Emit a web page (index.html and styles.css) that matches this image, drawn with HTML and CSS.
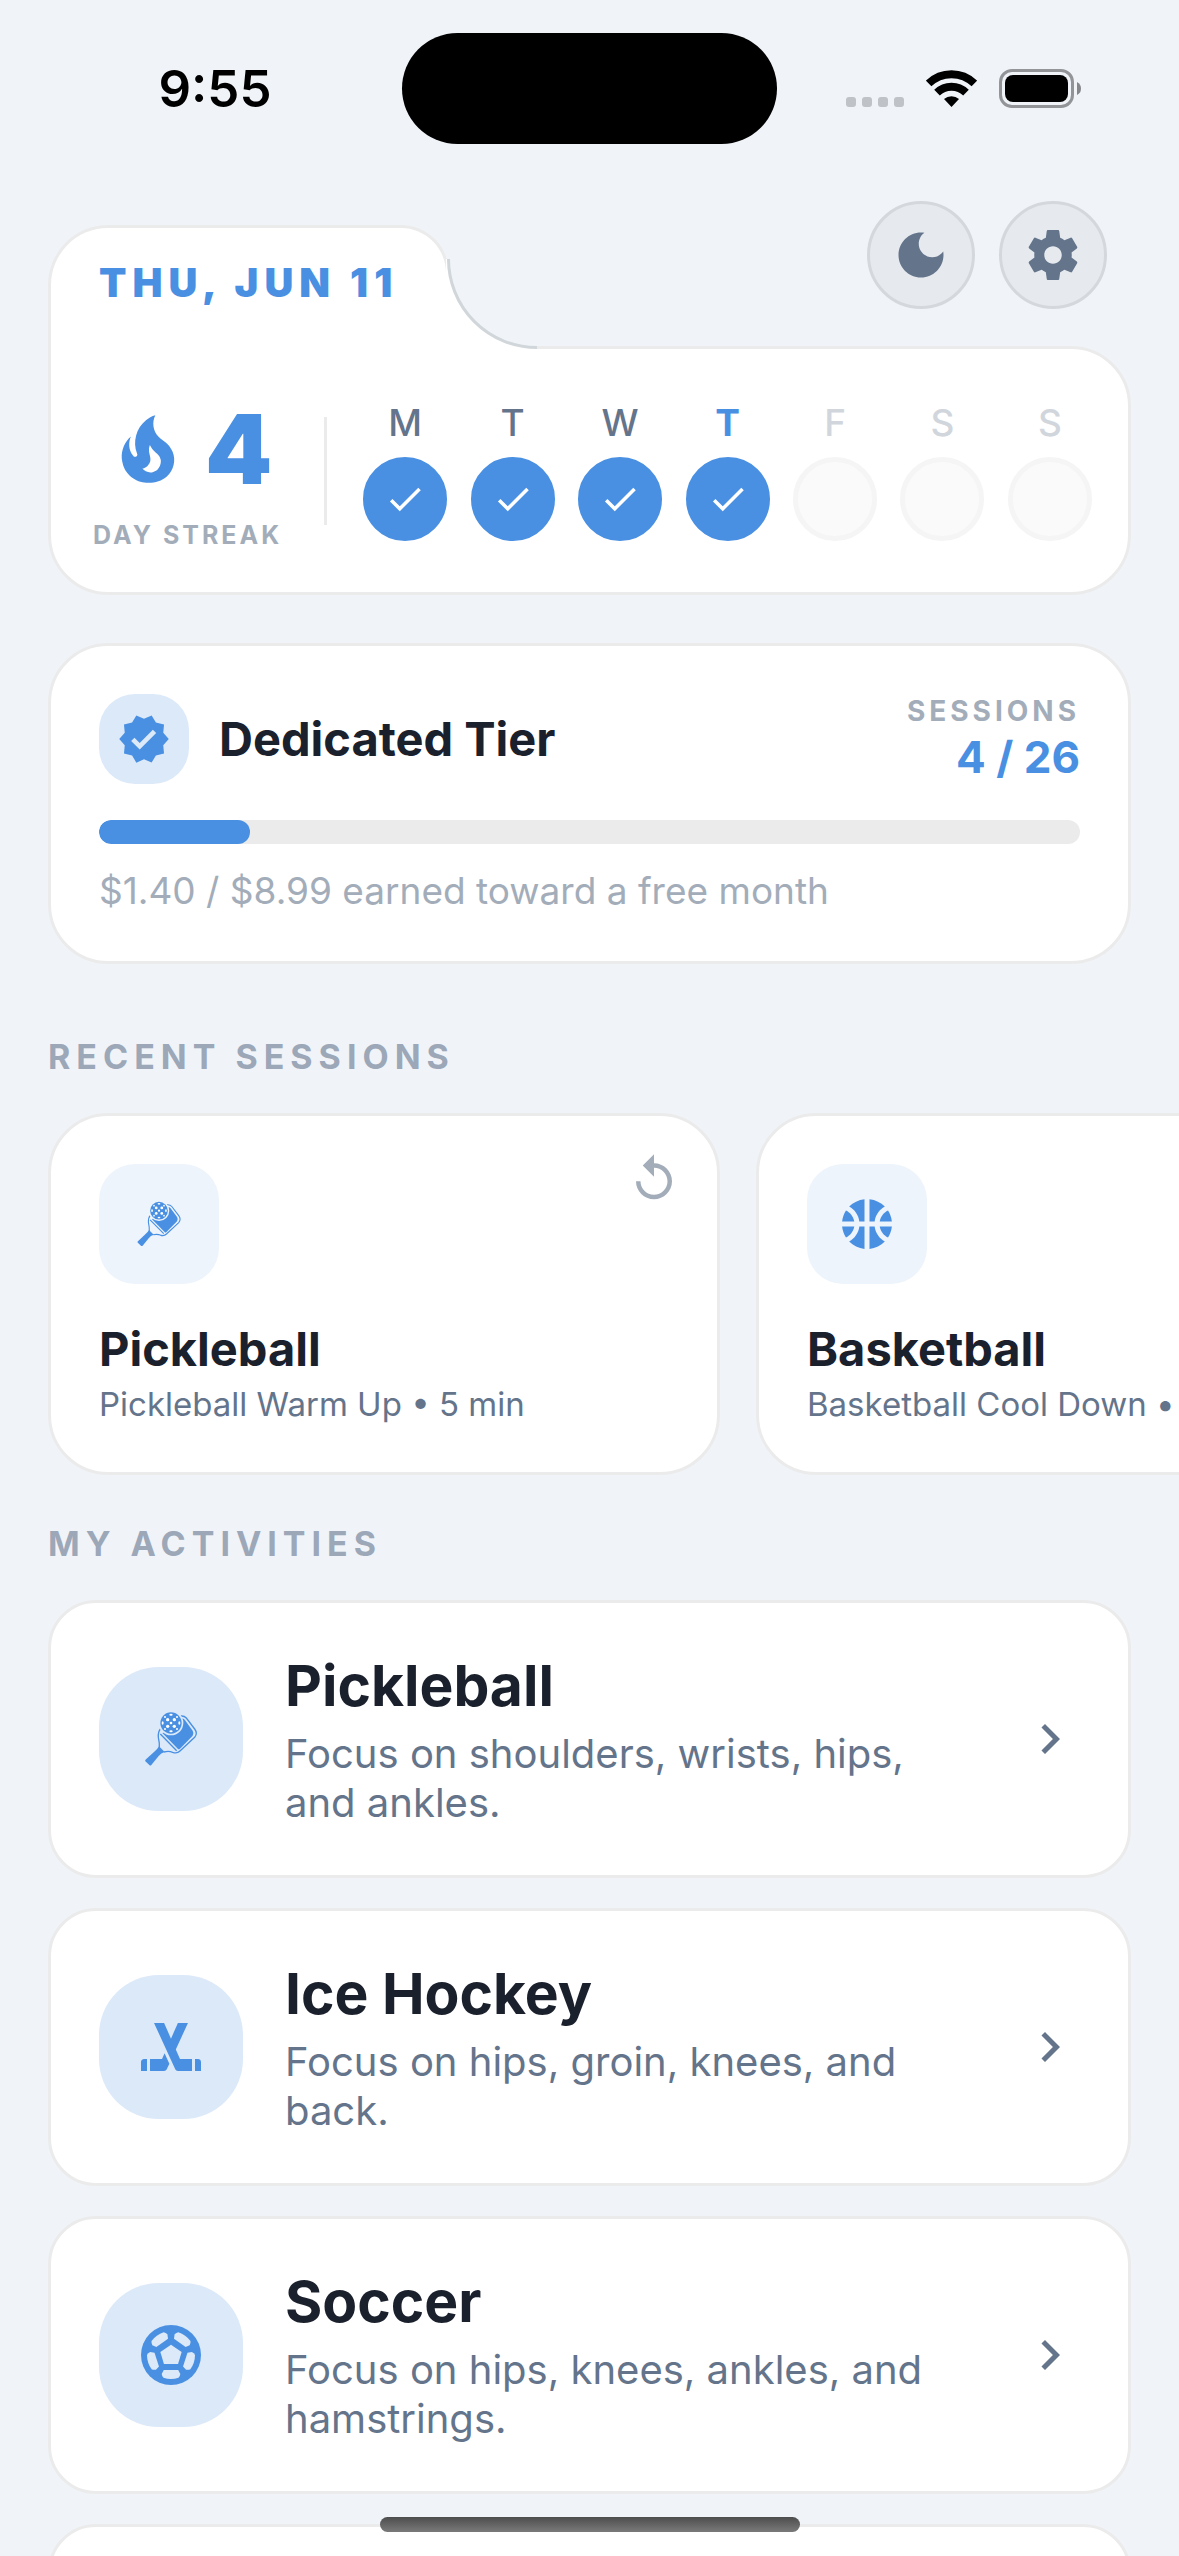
FILE: index.html
```html
<!DOCTYPE html>
<html lang="en">
<head>
    <meta charset="UTF-8">
    <meta name="viewport" content="width=device-width, initial-scale=1.0">
    <title>Home</title>
    <link rel="stylesheet" href="styles.css">
</head>
<body>
    <!-- shared icon shapes -->
    <svg class="sprite" aria-hidden="true">
        <symbol id="check" viewBox="0 0 24 24">
            <path d="M9 16.17L4.83 12l-1.42 1.41L9 19 21 7l-1.41-1.41z"/>
        </symbol>
        <symbol id="chevron" viewBox="0 0 24 24">
            <path d="M10 6L8.59 7.41 13.17 12l-4.58 4.59L10 18l6-6z"/>
        </symbol>
        <symbol id="replay" viewBox="0 0 24 24">
            <path d="M12 5V1L7 6l5 5V7c3.31 0 6 2.69 6 6s-2.69 6-6 6-6-2.69-6-6H4c0 4.42 3.58 8 8 8s8-3.58 8-8-3.58-8-8-8z"/>
        </symbol>
        <symbol id="paddle" viewBox="183 177 180 180">
            <path d="M198 328L222 306Q233 297 237 289L254 306Q243 309 236 318L214 345Q211 348 208 345L196 334Q194 331 198 328z"/>
            <path fill="none" stroke="currentColor" stroke-width="4" d="M241 237Q234 245 235 262Q239 280 238 292M252 306Q266 302 278 307Q291 312 300 303L344 262Q354 250 344 237L319 204Q313 197 302 198"/>
            <path fill="none" stroke="currentColor" stroke-width="4" d="M241 252L290 302"/>
            <path d="M247 249L294 297Q297 299 300 296L338 257Q343 250 338 242L314 209Q310 205 304 206L280 240z"/>
            <circle class="tile-fill" cx="273" cy="219" r="37"/>
            <circle cx="273" cy="219" r="32"/>
            <g fill="#fff">
                <circle cx="273" cy="219" r="4"/>
                <circle cx="263" cy="209" r="5"/>
                <circle cx="283" cy="209" r="5"/>
                <circle cx="263" cy="229" r="5"/>
                <circle cx="283" cy="229" r="5"/>
                <ellipse cx="273" cy="194" rx="5" ry="3"/>
                <ellipse cx="273" cy="244" rx="5" ry="3"/>
                <ellipse cx="248" cy="219" rx="3" ry="5"/>
                <ellipse cx="298" cy="219" rx="3" ry="5"/>
                <circle cx="255" cy="201" r="3"/>
                <circle cx="291" cy="201" r="3"/>
                <circle cx="255" cy="237" r="3"/>
                <circle cx="291" cy="237" r="3"/>
            </g>
        </symbol>
        <symbol id="basketball" viewBox="0 0 24 24">
            <path d="M17.09 11h4.86c-.16-1.61-.71-3.11-1.54-4.4-1.73.83-2.99 2.45-3.32 4.4zM6.91 11C6.58 9.05 5.32 7.43 3.59 6.6 2.76 7.89 2.21 9.39 2.05 11h4.86zM15.07 11c.32-2.59 1.88-4.79 4.06-6-1.6-1.63-3.74-2.71-6.13-2.95V11h2.07zM8.93 11H11V2.05C8.61 2.29 6.46 3.37 4.87 5c2.18 1.21 3.74 3.41 4.06 6zM15.07 13H13v8.95c2.39-.24 4.54-1.32 6.13-2.95-2.18-1.21-3.74-3.41-4.06-6zM3.59 17.4c1.73-.83 2.99-2.45 3.32-4.4H2.05c.16 1.61.71 3.11 1.54 4.4zM17.09 13c.33 1.95 1.59 3.57 3.32 4.4.83-1.29 1.38-2.79 1.54-4.4h-4.86zM8.93 13c-.32 2.59-1.88 4.79-4.06 6 1.6 1.63 3.74 2.71 6.13 2.95V13H8.93z"/>
        </symbol>
        <symbol id="hockey" viewBox="0 0 24 24">
            <path d="M2 17v3h2v-4H3c-.55 0-1 .45-1 1zM9 16H5v4h4.69c.38 0 .72-.21.89-.55l.87-1.9-1.59-3.48L9 16zM21.71 16.29c-.18-.18-.43-.29-.71-.29h-1v4h2v-3c0-.28-.11-.53-.29-.71zM13.6 12.84L17.65 4H14.3l-1.76 3.97-.49 1.1-.05.14L9.7 4H6.35l4.05 8.84 1.52 3.32.08.18 1.42 3.1c.17.34.51.55.89.55H19v-4h-4l-1.4-3.15z"/>
        </symbol>
        <symbol id="soccer" viewBox="0 0 24 24">
            <circle cx="12" cy="12" r="10"/>
            <g class="tile-fill">
                <path d="M12 8.55L15.55 11L14.35 15H9.65L8.45 11z"/>
                <path id="panel" d="M9.6 17H14.4L15.1 18.3Q15 19.1 14.5 19.6Q12 20.4 9.5 19.6Q9 19.1 8.9 18.3z"/>
                <use href="#panel" transform="rotate(72 12 12)"/>
                <use href="#panel" transform="rotate(144 12 12)"/>
                <use href="#panel" transform="rotate(216 12 12)"/>
                <use href="#panel" transform="rotate(288 12 12)"/>
            </g>
        </symbol>
    </svg>

    <div class="app">
        <div class="status-bar">
            <span class="time">9:55</span>
            <span class="island"></span>
            <div class="status-icons">
                <svg width="58" height="39" viewBox="0 0 58 39" fill="#bfc3c7" aria-hidden="true">
                    <rect y="28" width="10" height="10" rx="3"/>
                    <rect x="16" y="28" width="10" height="10" rx="3"/>
                    <rect x="32" y="28" width="10" height="10" rx="3"/>
                    <rect x="48" y="28" width="10" height="10" rx="3"/>
                </svg>
                <svg width="51" height="39" viewBox="0 0 51 39" aria-hidden="true">
                    <path fill="none" stroke="#000" stroke-width="8" d="M2.6 14.5A32.8 32.8 0 0 1 48.4 14.5M11 23.6A20.7 20.7 0 0 1 40 23.6"/>
                    <path d="M25.5 38L18 30A11.5 11.5 0 0 1 33 30z"/>
                </svg>
                <svg width="83" height="39" viewBox="0 0 83 39" aria-hidden="true">
                    <rect x="1.5" y="1.5" width="72" height="36" rx="11.5" fill="none" stroke="#929498" stroke-width="3"/>
                    <rect x="6" y="6" width="63" height="27" rx="8"/>
                    <path fill="#85878b" d="M78 13Q82 15 82 19.5T78 26z"/>
                </svg>
            </div>
        </div>

        <header class="top">
            <h1 class="date-tab">THU, JUN 11</h1>
            <svg class="notch" width="91" height="90" viewBox="0 0 91 90" aria-hidden="true">
                <path fill="#fff" d="M0 0V90H91V88.5A89 88.5 0 0 1 2 0z"/>
                <path fill="none" stroke="#d1d6db" stroke-width="3" d="M2.5 0A88.5 88.5 0 0 0 91 88.5"/>
            </svg>
            <div class="top-buttons">
                <button class="round-btn" aria-label="Dark mode">
                    <svg width="60" height="60" viewBox="0 0 24 24">
                        <path d="M12 3c-4.97 0-9 4.03-9 9s4.03 9 9 9 9-4.03 9-9c0-.46-.04-.92-.1-1.36-.98 1.37-2.58 2.26-4.4 2.26-2.98 0-5.4-2.42-5.4-5.4 0-1.81.89-3.42 2.26-4.4-.44-.06-.9-.1-1.36-.1z"/>
                    </svg>
                </button>
                <button class="round-btn" aria-label="Settings">
                    <svg width="60" height="60" viewBox="0 0 24 24">
                        <path d="M19.43 12.98c.04-.32.07-.64.07-.98s-.03-.66-.07-.98l2.11-1.65c.19-.15.24-.42.12-.64l-2-3.46c-.12-.22-.39-.3-.61-.22l-2.49 1c-.52-.4-1.08-.73-1.69-.98l-.38-2.65C14.46 2.18 14.25 2 14 2h-4c-.25 0-.46.18-.49.42l-.38 2.65c-.61.25-1.17.59-1.69.98l-2.49-1c-.23-.09-.49 0-.61.22l-2 3.46c-.13.22-.07.49.12.64l2.11 1.65c-.04.32-.07.65-.07.98s.03.66.07.98l-2.11 1.65c-.19.15-.24.42-.12.64l2 3.46c.12.22.39.3.61.22l2.49-1c.52.4 1.08.73 1.69.98l.38 2.65c.03.24.24.42.49.42h4c.25 0 .46-.18.49-.42l.38-2.65c.61-.25 1.17-.59 1.69-.98l2.49 1c.23.09.49 0 .61-.22l2-3.46c.12-.22.07-.49-.12-.64l-2.11-1.65zM12 15.5c-1.93 0-3.5-1.57-3.5-3.5s1.57-3.5 3.5-3.5 3.5 1.57 3.5 3.5-1.57 3.5-3.5 3.5z"/>
                    </svg>
                </button>
            </div>
        </header>

        <main>
            <section class="card streak-card">
                <div class="streak">
                    <div class="streak-count">
                        <svg width="90" height="90" viewBox="0 0 24 24" aria-hidden="true">
                            <path d="M17.66 11.2C17.43 10.9 17.15 10.64 16.89 10.38C16.22 9.78 15.46 9.35 14.82 8.72C13.33 7.26 13 4.85 13.95 3C13 3.23 12.17 3.75 11.46 4.32C8.87 6.4 7.85 10.07 9.07 13.22C9.11 13.32 9.15 13.42 9.15 13.55C9.15 13.77 9 13.97 8.8 14.05C8.57 14.15 8.33 14.09 8.14 13.93C8.08 13.88 8.04 13.83 8 13.76C6.87 12.33 6.69 10.28 7.45 8.64C5.78 10 4.87 12.3 5 14.47C5.06 14.97 5.12 15.47 5.29 15.97C5.43 16.57 5.7 17.17 6 17.7C7.08 19.43 8.95 20.67 10.96 20.92C13.1 21.19 15.39 20.8 17.03 19.32C18.86 17.66 19.5 15 18.56 12.72L18.43 12.46C18.22 12 17.66 11.2 17.66 11.2M14.5 17.5C14.22 17.74 13.76 18 13.4 18.1C12.28 18.5 11.16 17.94 10.5 17.28C11.69 17 12.4 16.12 12.61 15.23C12.78 14.43 12.46 13.77 12.33 13C12.21 12.26 12.23 11.63 12.5 10.94C12.69 11.32 12.89 11.7 13.13 12C13.9 13 15.11 13.44 15.37 14.8C15.41 14.94 15.43 15.08 15.43 15.23C15.46 16.05 15.1 16.95 14.5 17.5Z"/>
                        </svg>
                        <span>4</span>
                    </div>
                    <div class="streak-label">DAY STREAK</div>
                </div>
                <div class="divider"></div>
                <ul class="days">
                    <li class="day done">M<span class="dot"><svg width="42" height="42"><use href="#check"/></svg></span></li>
                    <li class="day done">T<span class="dot"><svg width="42" height="42"><use href="#check"/></svg></span></li>
                    <li class="day done">W<span class="dot"><svg width="42" height="42"><use href="#check"/></svg></span></li>
                    <li class="day done today">T<span class="dot"><svg width="42" height="42"><use href="#check"/></svg></span></li>
                    <li class="day">F<span class="dot"></span></li>
                    <li class="day">S<span class="dot"></span></li>
                    <li class="day">S<span class="dot"></span></li>
                </ul>
            </section>

            <section class="card tier-card">
                <div class="tier-head">
                    <span class="tile tile-small">
                        <svg width="54" height="54" viewBox="0 0 24 24" aria-hidden="true">
                            <path d="M23 12l-2.44-2.79.34-3.69-3.61-.82-1.89-3.2L12 2.96 8.6 1.5 6.71 4.69 3.1 5.5l.34 3.7L1 12l2.44 2.79-.34 3.7 3.61.82L8.6 22.5l3.4-1.47 3.4 1.46 1.89-3.19 3.61-.82-.34-3.69L23 12zm-12.91 4.72l-3.8-3.81 1.48-1.48 2.32 2.33 5.85-5.87 1.48 1.48-7.33 7.35z"/>
                        </svg>
                    </span>
                    <h2 class="tier-name">Dedicated Tier</h2>
                    <div class="tier-sessions">
                        <div class="tier-label">SESSIONS</div>
                        <div class="tier-count">4 / 26</div>
                    </div>
                </div>
                <div class="progress">
                    <div class="progress-fill" style="width: 15.4%"></div>
                </div>
                <p class="tier-note">$1.40 / $8.99 earned toward a free month</p>
            </section>

            <h2 class="section-title recent-title">RECENT SESSIONS</h2>
            <div class="sessions">
                <article class="card session">
                    <span class="tile tile-light">
                        <svg width="50" height="50" aria-hidden="true"><use href="#paddle"/></svg>
                    </span>
                    <button class="replay-btn" aria-label="Repeat session">
                        <svg width="54" height="54"><use href="#replay"/></svg>
                    </button>
                    <h3 class="session-name">Pickleball</h3>
                    <p class="session-info">Pickleball Warm Up • 5 min</p>
                </article>
                <article class="card session">
                    <span class="tile tile-light">
                        <svg width="60" height="60" aria-hidden="true"><use href="#basketball"/></svg>
                    </span>
                    <h3 class="session-name">Basketball</h3>
                    <p class="session-info">Basketball Cool Down •</p>
                </article>
            </div>

            <h2 class="section-title activities-title">MY ACTIVITIES</h2>
            <div class="activities">
                <a class="card activity" href="#pickleball">
                    <span class="tile tile-large">
                        <svg width="60" height="60" aria-hidden="true"><use href="#paddle"/></svg>
                    </span>
                    <div class="activity-text">
                        <h3>Pickleball</h3>
                        <p>Focus on shoulders, wrists, hips, and ankles.</p>
                    </div>
                    <svg class="chevron" width="60" height="60" aria-hidden="true"><use href="#chevron"/></svg>
                </a>
                <a class="card activity" href="#ice-hockey">
                    <span class="tile tile-large">
                        <svg width="72" height="72" aria-hidden="true"><use href="#hockey"/></svg>
                    </span>
                    <div class="activity-text">
                        <h3>Ice Hockey</h3>
                        <p>Focus on hips, groin, knees, and back.</p>
                    </div>
                    <svg class="chevron" width="60" height="60" aria-hidden="true"><use href="#chevron"/></svg>
                </a>
                <a class="card activity" href="#soccer-activity">
                    <span class="tile tile-large">
                        <svg width="72" height="72" aria-hidden="true"><use href="#soccer"/></svg>
                    </span>
                    <div class="activity-text">
                        <h3>Soccer</h3>
                        <p>Focus on hips, knees, ankles, and hamstrings.</p>
                    </div>
                    <svg class="chevron" width="60" height="60" aria-hidden="true"><use href="#chevron"/></svg>
                </a>
                <div class="card activity"></div>
            </div>
        </main>

        <div class="home-indicator"></div>
    </div>
</body>
</html>
```

FILE: styles.css
```css
:root {
    --page: #f0f4f8;
    --blue: #4a90e2;
    --dark: #1a202c;
    --slate: #64748b;
    --muted: #a3adba;
    --line: #ebebeb;
    --tile: #dce9f9;
}

* {
    box-sizing: border-box;
    margin: 0;
    padding: 0;
}

body {
    background: var(--page);
    color: var(--dark);
    font-family: Inter, "Liberation Sans", sans-serif;
}

button {
    border: none;
    background: none;
    cursor: pointer;
}

svg {
    display: block;
    flex: none;
}

.sprite {
    position: absolute;
    width: 0;
    height: 0;
}

.app {
    height: 100vh;
    overflow: hidden;
}

/* status bar */
.status-bar {
    display: grid;
    grid-template-columns: 1fr 375px 1fr;
    align-items: center;
    padding-top: 33px;
}

.time {
    padding-left: 28px;
    color: #000;
    text-align: center;
    font-size: 51px;
    font-weight: 600;
    line-height: 60px;
}

.island {
    height: 111px;
    border-radius: 56px;
    background: #000;
}

.status-icons {
    display: flex;
    gap: 22px;
    padding-left: 69px;
}

/* date tab and round buttons */
.top {
    display: flex;
    align-items: flex-end;
    padding: 0 72px 0 48px;
    margin-top: 57px;
    margin-bottom: -3px;
    position: relative;
}

.date-tab {
    margin-top: 24px;
    padding: 31px 48px 42px;
    border: 3px solid var(--line);
    border-bottom: none;
    border-radius: 60px 48px 0 0;
    background: #fff;
    color: var(--blue);
    font-size: 40px;
    font-weight: 900;
    line-height: 48px;
    letter-spacing: 6px;
}

.notch {
    margin-left: -3px;
}

.top-buttons {
    display: flex;
    align-self: flex-start;
    gap: 24px;
    margin-left: auto;
}

.round-btn {
    display: flex;
    align-items: center;
    justify-content: center;
    width: 108px;
    height: 108px;
    border: 3px solid #d4d8dc;
    border-radius: 50%;
    background: #e6eaef;
    fill: var(--slate);
}

.card {
    border: 3px solid var(--line);
    border-radius: 60px;
    background: #fff;
}

/* streak */
.streak-card {
    display: flex;
    align-items: center;
    margin: 0 48px;
    padding: 42px 36px;
    border-top-left-radius: 0;
}

.streak {
    padding: 0 6px;
    text-align: center;
}

.streak-count {
    display: flex;
    align-items: center;
    justify-content: center;
    gap: 12px;
    color: var(--blue);
    fill: var(--blue);
    font-size: 96px;
    font-weight: 900;
    line-height: 116px;
}

.streak-label {
    margin-top: 13px;
    color: var(--muted);
    font-size: 25px;
    font-weight: 700;
    line-height: 30px;
    letter-spacing: 3px;
}

.divider {
    width: 3px;
    height: 108px;
    margin: 0 36px;
    background: var(--line);
}

.days {
    display: flex;
    flex: 1;
    justify-content: space-between;
    list-style: none;
}

.day {
    display: flex;
    flex-direction: column;
    align-items: center;
    gap: 12px;
    color: #d1d6dd;
    font-size: 37px;
    font-weight: 500;
    line-height: 45px;
}

.day.done {
    color: var(--slate);
}

.day.today {
    color: var(--blue);
    font-weight: 700;
}

.dot {
    display: flex;
    align-items: center;
    justify-content: center;
    width: 84px;
    height: 84px;
    border: 5px solid #f5f5f5;
    border-radius: 50%;
    background: #fafafa;
}

.done .dot {
    border-color: var(--blue);
    background: var(--blue);
    fill: #fff;
}

/* icon tiles */
.tile {
    display: flex;
    flex: none;
    align-items: center;
    justify-content: center;
    width: 120px;
    height: 120px;
    border-radius: 36px;
    background: var(--tile);
    color: var(--blue);
    fill: var(--blue);
}

.tile-small {
    width: 90px;
    height: 90px;
}

.tile-light {
    --tile: #edf4fc;
}

.tile-large {
    width: 144px;
    height: 144px;
    border-radius: 60px;
}

.tile-fill {
    fill: var(--tile);
}

/* tier */
.tier-card {
    margin: 48px 48px 0;
    padding: 48px;
}

.tier-head {
    display: flex;
    align-items: center;
    gap: 30px;
}

.tier-name {
    flex: 1;
    font-size: 47px;
    font-weight: 700;
    line-height: 58px;
}

.tier-sessions {
    text-align: right;
}

.tier-label {
    color: var(--muted);
    font-size: 28px;
    font-weight: 700;
    line-height: 34px;
    letter-spacing: 4px;
}

.tier-count {
    margin-top: 2px;
    color: var(--blue);
    font-size: 44px;
    font-weight: 700;
    line-height: 54px;
}

.progress {
    height: 24px;
    margin-top: 36px;
    overflow: hidden;
    border-radius: 12px;
    background: var(--line);
}

.progress-fill {
    height: 100%;
    border-radius: 12px;
    background: var(--blue);
}

.tier-note {
    margin-top: 24px;
    color: var(--muted);
    font-size: 37px;
    line-height: 45px;
}

.section-title {
    padding: 0 48px;
    margin-bottom: 36px;
    color: #9ca7b8;
    font-size: 34px;
    font-weight: 700;
    line-height: 41px;
    letter-spacing: 6px;
}

.recent-title {
    margin-top: 72px;
}

.activities-title {
    margin-top: 48px;
}

/* recent sessions */
.sessions {
    display: flex;
    gap: 36px;
    padding-left: 48px;
    overflow: hidden;
}

.session {
    position: relative;
    flex: none;
    width: 672px;
    padding: 48px;
}

.replay-btn {
    position: absolute;
    top: 36px;
    right: 36px;
    fill: var(--muted);
}

.session-name {
    margin-top: 36px;
    font-size: 47px;
    font-weight: 700;
    line-height: 58px;
}

.session-info {
    margin-top: 6px;
    color: var(--slate);
    font-size: 33px;
    line-height: 40px;
    white-space: nowrap;
}

/* activities */
.activities {
    display: flex;
    flex-direction: column;
    gap: 30px;
    padding: 0 48px;
}

.activity {
    display: flex;
    align-items: center;
    gap: 42px;
    min-height: 278px;
    padding: 48px;
    border-radius: 48px;
    color: inherit;
    text-decoration: none;
}

.activity-text {
    flex: 1;
}

.activity-text h3 {
    font-size: 57px;
    font-weight: 700;
    line-height: 70px;
}

.activity-text p {
    margin-top: 8px;
    color: var(--slate);
    font-size: 40px;
    line-height: 49px;
}

.chevron {
    fill: var(--slate);
}

.home-indicator {
    position: fixed;
    bottom: 24px;
    left: 50%;
    width: 420px;
    height: 15px;
    margin-left: -210px;
    border-radius: 8px;
    background: linear-gradient(#4d4d4d, #7a7a7a);
}
```
